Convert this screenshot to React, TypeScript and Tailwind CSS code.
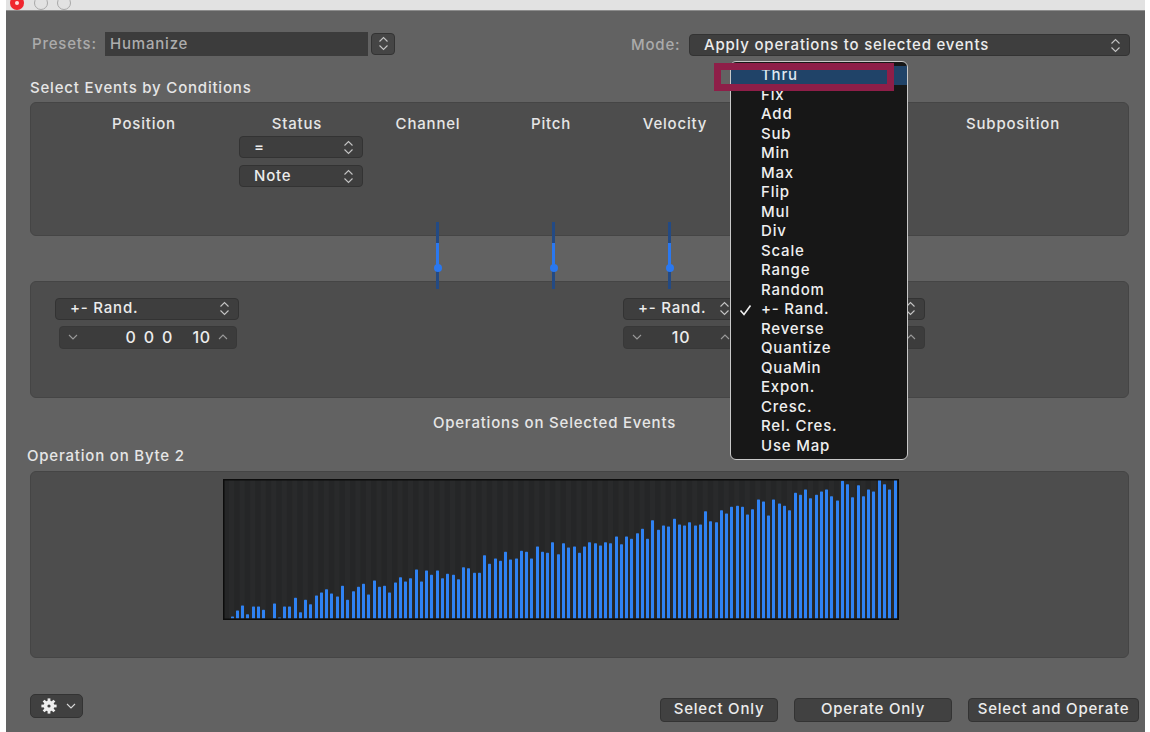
import React from "react";

const menuItems = [
  "Thru", "Fix", "Add", "Sub", "Min", "Max", "Flip", "Mul", "Div", "Scale",
  "Range", "Random", "+- Rand.", "Reverse", "Quantize", "QuaMin", "Expon.",
  "Cresc.", "Rel. Cres.", "Use Map",
];

// bar tops measured at 3x, bottom of the chart is 447
const barTops = [
  441, 423, 408, 434, 411, 411, 421, 447, 402, 444, 411, 411, 385, 428, 391, 404,
  378, 369, 359, 372, 381, 349, 391, 365, 352, 343, 375, 333, 352, 349, 369, 339,
  323, 336, 326, 300, 336, 303, 316, 303, 326, 313, 316, 329, 293, 296, 310, 310,
  257, 283, 267, 274, 247, 270, 267, 244, 247, 267, 231, 247, 250, 218, 254, 221,
  234, 231, 250, 231, 218, 221, 228, 218, 221, 201, 224, 201, 208, 191, 178, 208,
  152, 181, 168, 171, 148, 165, 168, 158, 168, 165, 125, 155, 158, 122, 132, 112,
  109, 112, 135, 119, 90, 96, 138, 90, 102, 109, 122, 70, 76, 60, 86, 76,
  66, 60, 80, 93, 34, 44, 83, 47, 80, 60, 66, 30, 44, 60, 30,
];

const UpDown = ({ className = "" }: { className?: string }) => (
  <svg width="11" height="15" viewBox="0 0 11 15" fill="none" className={className}>
    <path d="M1.5 5.5 5.5 1.5 9.5 5.5M1.5 9.5 5.5 13.5 9.5 9.5" stroke="#c4c4c4" strokeWidth="1.1" />
  </svg>
);

const Chev = ({ up = false, color = "#9a9a9a" }: { up?: boolean; color?: string }) => (
  <svg width="10" height="6" viewBox="0 0 10 6" fill="none">
    <path d={up ? "M1 5 5 1 9 5" : "M1 1 5 5 9 1"} stroke={color} strokeWidth="1.1" />
  </svg>
);

const Gear = () => (
  <svg width="16" height="16" viewBox="0 0 16 16">
    <circle cx="8" cy="8" r="5.4" fill="#eeeeee" />
    {[0, 45, 90, 135, 180, 225, 270, 315].map((a) => (
      <rect key={a} x="6.6" y="0.4" width="2.8" height="3.4" fill="#eeeeee" transform={`rotate(${a} 8 8)`} />
    ))}
    <circle cx="8" cy="8" r="1.6" fill="#404040" />
  </svg>
);

const Select = ({ label, className = "" }: { label: string; className?: string }) => (
  <div className={`flex h-[22px] items-center justify-between rounded-[4px] border border-[#333] bg-[#3e3e3e] pr-2 text-[#ececec] ${className}`}>
    <span>{label}</span>
    <UpDown />
  </div>
);

const Stepper = ({ children, className = "" }: { children?: React.ReactNode; className?: string }) => (
  <div className={`flex h-[23px] items-center justify-between rounded-[4px] border border-[#383838] bg-[#3c3c3c] px-2 text-[#ececec] ${className}`}>
    <Chev />
    {children}
    <Chev up />
  </div>
);

const Button = ({ label, className = "" }: { label: string; className?: string }) => (
  <div className={`flex h-[24px] items-center justify-center rounded-[4px] border border-[#333] bg-[#414141] text-[#ececec] ${className}`}>
    {label}
  </div>
);

const Chart = () => {
  const step = (895 - 232) / (barTops.length - 1);
  return (
    <svg width="676" height="141" viewBox="0 0 676 141" className="block">
      <rect width="676" height="141" fill="#252627" />
      {barTops.map((_, i) =>
        i % 2 === 0 ? (
          <rect key={i} x={6 + i * step} y="0" width={step} height="141" fill="#292a2b" />
        ) : null
      )}
      {barTops.map((t, i) => (
        <rect
          key={i}
          x={Math.round(7.5 + i * step)}
          y={139.5 - (447 - t) / 3}
          width="3"
          height={(447 - t) / 3}
          rx="0.6"
          fill="#2f82f3"
        />
      ))}
      <rect x="0.75" y="0.75" width="674.5" height="139.5" fill="none" stroke="#0c0c0c" strokeWidth="1.5" />
    </svg>
  );
};

const Slider = ({ className = "" }: { className?: string }) => (
  <div className={`absolute top-[222px] h-[67px] w-[3px] bg-[#234a84] ${className}`}>
    <div className="mt-[21px] h-[25px] w-[3px] bg-[#2a78f0]" />
    <div className="absolute left-[-2.5px] top-[42px] h-[8px] w-[8px] rounded-full bg-[#2a78f0]" />
  </div>
);

export default function App() {
  return (
    <div
      className="relative flex h-[732px] w-[1150px] overflow-hidden bg-white text-[15px] font-medium tracking-[0.8px]"
      style={{ fontFamily: "Inter, 'Liberation Sans', sans-serif" }}
    >
      <div className="ml-[6px] flex w-[1139px] flex-col bg-[#626262]">
        {/* title bar */}
        <div className="flex h-[11px] items-center gap-[10px] overflow-hidden border-b border-[#8c8c8c] bg-[#e2e2e2] pl-[4px]">
          <div className="relative -mt-[4px] flex h-[14px] w-[14px] shrink-0 items-center justify-center rounded-full bg-[#f0262f]">
            <div className="h-[4px] w-[4px] rounded-full bg-[#fdd]" />
          </div>
          <div className="-mt-[4px] h-[14px] w-[14px] shrink-0 rounded-full border border-[#a8a8a8]" />
          <div className="-mt-[4px] ml-[-1px] h-[14px] w-[14px] shrink-0 rounded-full border border-[#a8a8a8]" />
        </div>

        {/* presets and mode */}
        <div className="mt-[20px] flex h-[25px] items-center">
          <span className="ml-[26px] w-[73px] pt-[1px] text-[#ababab]">Presets:</span>
          <div className="flex h-[24px] w-[263px] items-center bg-[#3c3c3c] pl-[5px] pt-[1px] text-[#adadad]">Humanize</div>
          <div className="ml-[3px] flex h-[22px] w-[24px] items-center justify-center rounded-[4px] border border-[#333] bg-[#454545]">
            <UpDown />
          </div>
          <span className="ml-[236px] mt-[3px] w-[58px] text-[#ababab]">Mode:</span>
          <Select label="Apply operations to selected events" className="mt-[3px] w-[441px] pl-[14px]" />
        </div>

        <div className="ml-[24px] mt-[21px] text-[#e6e6e6]">Select Events by Conditions</div>

        {/* condition panel */}
        <div className="ml-[24px] mt-[2px] flex h-[134px] w-[1099px] rounded-[6px] border border-[#454545] bg-[#4d4d4d] pt-[10px] text-[#e6e6e6]">
          <div className="ml-[51px] w-[124px] text-center">Position</div>
          <div className="ml-[29px] flex w-[124px] flex-col items-center">
            <span>Status</span>
            <Select label="=" className="ml-[8px] mt-[1px] w-[124px] shrink-0 pl-[14px]" />
            <Select label="Note" className="ml-[8px] mt-[7px] w-[124px] shrink-0 pl-[14px]" />
          </div>
          <div className="ml-[7px] w-[124px] text-center">Channel</div>
          <div className="w-[122px] text-center">Pitch</div>
          <div className="ml-[2px] w-[122px] text-center">Velocity</div>
          <div className="ml-[216px] w-[122px] text-center">Subposition</div>
        </div>

        {/* operation panel */}
        <div className="ml-[24px] mt-[45px] flex h-[117px] w-[1099px] rounded-[6px] border border-[#454545] bg-[#4d4d4d] pt-[16px]">
          <div className="ml-[24px] flex w-[184px] flex-col gap-[6px]">
            <Select label="+- Rand." className="pl-[14px]" />
            <Stepper className="ml-[4px] w-[178px]">
              <span className="ml-auto mr-[7px] flex gap-[12px] text-[16px]">
                <span className="tracking-[8px]">000</span>
                <span>10</span>
              </span>
            </Stepper>
          </div>
          <div className="ml-[384px] flex w-[116px] flex-col gap-[6px]">
            <Select label="+- Rand." className="pl-[14px]" />
            <Stepper>
              <span className="text-[16px]">10</span>
            </Stepper>
          </div>
          <div className="ml-[70px] flex w-[116px] flex-col gap-[6px]">
            <Select label="" />
            <Stepper />
          </div>
        </div>

        <div className="mt-[14px] w-[1097px] text-center text-[#e6e6e6]">Operations on Selected Events</div>
        <div className="ml-[21px] mt-[11px] text-[#e6e6e6]">Operation on Byte 2</div>

        {/* byte 2 chart */}
        <div className="ml-[24px] mt-[3px] h-[187px] w-[1099px] rounded-[6px] border border-[#454545] bg-[#4d4d4d] pl-[192px] pt-[7px]">
          <Chart />
        </div>

        {/* footer */}
        <div className="relative mt-[36px] flex items-start">
          <div className="ml-[24px] flex h-[24px] w-[53px] items-center gap-[9px] rounded-[5px] border border-[#333] bg-[#404040] pl-[10px]">
            <Gear />
            <Chev color="#d8d8d8" />
          </div>
          <Button label="Select Only" className="ml-[577px] mt-[4px] w-[118px]" />
          <Button label="Operate Only" className="ml-[16px] mt-[4px] w-[158px]" />
          <Button label="Select and Operate" className="ml-[16px] mt-[4px] w-[171px]" />
        </div>
      </div>

      <Slider className="left-[436px]" />
      <Slider className="left-[552px]" />
      <Slider className="left-[668px]" />

      {/* mode popup menu */}
      <div className="absolute left-[730px] top-[61px] h-[399px] w-[178px] rounded-[6px] border border-[#c8c8c8] bg-[#171717] pt-[3.5px] text-[#efefef]">
        {menuItems.map((item, i) => (
          <div
            key={item}
            className={`relative flex h-[19.53px] items-center pl-[30px] ${i === 0 ? "bg-[#204368] text-[#dfe8f2]" : ""}`}
          >
            {item === "+- Rand." && (
              <svg width="13" height="12" viewBox="0 0 13 12" fill="none" className="absolute left-[8px] top-[4px]">
                <path d="M1.5 6.5 5 10.5 11.5 1.5" stroke="#efefef" strokeWidth="1.6" />
              </svg>
            )}
            {item}
          </div>
        ))}
      </div>

      {/* red annotation box */}
      <div className="absolute left-[714px] top-[63px] h-[28px] w-[180px] border-[7px] border-[#8e1e48]" />
    </div>
  );
}
